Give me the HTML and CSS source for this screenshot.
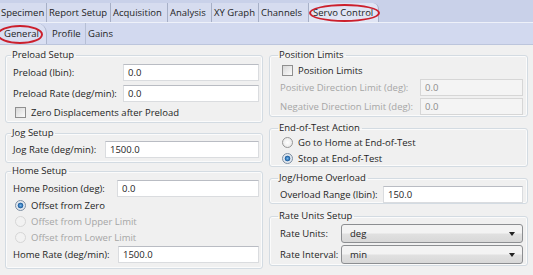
FILE: index.html
```html
<!DOCTYPE html>
<html>
<head>
<title>Servo Control</title>
<link rel="stylesheet" href="styles.css">
</head>
<body>

<div class="tabbar top">
<span class="tab t-spec">Specimen</span>
<span class="tab t-report">Report Setup</span>
<span class="tab t-acq">Acquisition</span>
<span class="tab t-ana">Analysis</span>
<span class="tab t-xy">XY Graph</span>
<span class="tab t-chan">Channels</span>
<span class="tab sel t-servo">Servo Control</span>
<span class="mark mark-servo"></span>
</div>

<div class="tabbar sub">
<span class="tab sel t-gen">General</span>
<span class="tab t-prof">Profile</span>
<span class="tab t-gains">Gains</span>
<span class="mark mark-general"></span>
</div>

<div class="panel">
<div class="col">

<fieldset class="group g-preload">
<legend>Preload Setup</legend>
<div class="row h21"><label class="lbl w-preload">Preload (lbin):</label><span class="field">0.0</span></div>
<div class="row h21"><label class="lbl w-preload">Preload Rate (deg/min):</label><span class="field">0.0</span></div>
<div class="row h16"><span class="box"></span>Zero Displacements after Preload</div>
</fieldset>

<fieldset class="group g-jog">
<legend>Jog Setup</legend>
<div class="row h19"><label class="lbl w-jog">Jog Rate (deg/min):</label><span class="field">1500.0</span></div>
</fieldset>

<fieldset class="group g-home">
<legend>Home Setup</legend>
<div class="row h20"><label class="lbl w-homepos">Home Position (deg):</label><span class="field">0.0</span></div>
<div class="row h15"><span class="dot on"></span>Offset from Zero</div>
<div class="row h16 off"><span class="dot"></span>Offset from Upper Limit</div>
<div class="row h16 off"><span class="dot"></span>Offset from Lower Limit</div>
<div class="row h19"><label class="lbl w-homerate">Home Rate (deg/min):</label><span class="field">1500.0</span></div>
</fieldset>

</div>
<div class="col">

<fieldset class="group g-limits">
<legend>Position Limits</legend>
<div class="row h16"><span class="box"></span>Position Limits</div>
<div class="row h19 off"><label class="lbl w-limit">Positive Direction Limit (deg):</label><span class="field dis">0.0</span></div>
<div class="row h19 off"><label class="lbl w-limit">Negative Direction Limit (deg):</label><span class="field dis">0.0</span></div>
</fieldset>

<fieldset class="group g-end">
<legend>End-of-Test Action</legend>
<div class="row h15"><span class="dot"></span>Go to Home at End-of-Test</div>
<div class="row h16"><span class="dot on"></span>Stop at End-of-Test</div>
</fieldset>

<fieldset class="group g-over">
<legend>Jog/Home Overload</legend>
<div class="row h18"><label class="lbl w-over">Overload Range (lbin):</label><span class="field">150.0</span></div>
</fieldset>

<fieldset class="group g-units">
<legend>Rate Units Setup</legend>
<div class="row h21"><label class="lbl w-units">Rate Units:</label><span class="combo">deg</span></div>
<div class="row h21"><label class="lbl w-units">Rate Interval:</label><span class="combo">min</span></div>
</fieldset>

</div>
</div>

</body>
</html>
```

FILE: styles.css
```css
/* Servo Control page, Windows 7 look */

*
{ box-sizing: border-box;
}

body
{ margin: 0;
width: 533px;
height: 275px;
overflow: hidden;
background-color: #f0f0f0;
font-family: "Open Sans", "DejaVu Sans", sans-serif;
font-size: 9.5px;
color: #1e1e1e;
}

/* Tabs */

div.tabbar
{ position: relative;
display: flex;
align-items: stretch;
overflow: hidden;
white-space: nowrap;
}

div.top
{ height: 23px;
padding-top: 3px;
background-color: #c9d1e9;
border-bottom: 1px solid #eef1f9;
}

div.sub
{ height: 22px;
background-color: #d2d9ef;
border-bottom: 1px solid #bcc5dc;
}

span.tab
{ display: flex;
align-items: center;
padding-left: 2px;
border-right: 1px solid #a7b0c7;
background-color: #d6dcef;
}

span.t-spec { width: 47px; padding-left: 1px; }
span.t-report { width: 64px; }
span.t-acq { width: 57px; }
span.t-ana { width: 44px; }
span.t-xy { width: 47px; }
span.t-chan { width: 50px; }
span.t-servo { width: 70px; padding-left: 4px; }

span.sel
{ background-color: #e0e5f4;
border-top-right-radius: 6px;
}

div.sub span.tab
{ border-right: 0;
background-color: transparent;
}

div.sub span.t-gen
{ width: 47px;
padding-left: 4px;
border-right: 1px solid #aeb7ce;
border-top-right-radius: 10px;
background-color: #d9dff2;
}

div.sub span.t-prof
{ width: 39px;
padding-left: 5px;
border-right: 1px solid #b6bfd5;
}

span.t-gains { width: 34px; }

/* red hand-drawn marks over the tabs */
span.mark
{ position: absolute;
border: 2px solid #cc1f2c;
border-radius: 50%;
}

span.mark-servo
{ left: 309px; top: 4px; width: 71px; height: 18px;
}

span.mark-general
{ left: -3px; top: 2px; width: 46px; height: 19px;
}

/* Panel */

div.panel
{ display: grid;
grid-template-columns: 258px 259px;
column-gap: 6px;
padding: 3px 0 0 5px;
}

div.col
{ display: flex;
flex-direction: column;
}

fieldset.group
{ margin: 0;
padding: 0 3px 0 7px;
border: 1px solid #d3dbe2;
border-radius: 3px;
box-shadow: inset 0 0 0 1px #fbfbfb;
}

div.col + div.col fieldset.group
{ padding: 0 4px 0 10px;
}

legend
{ padding: 0 2px 0 1px;
margin-left: -2px;
line-height: 14px;
}

div.row
{ display: flex;
align-items: center;
}

div.h15 { height: 15px; }
div.h16 { height: 16px; }
div.h18 { height: 18px; }
div.h19 { height: 19px; }
div.h20 { height: 20px; }
div.h21 { height: 21px; }

label.lbl
{ flex: none;
}

/* label widths line the fields up */
label.w-preload { width: 110px; }
label.w-jog { width: 92px; }
label.w-homepos { width: 104px; }
label.w-homerate { width: 105px; }
label.w-limit { width: 140px; }
label.w-over { width: 103px; }
label.w-units { width: 61px; }

span.field
{ flex: 1;
height: 17px;
line-height: 15px;
padding: 0 4px;
background-color: #fff;
border: 1px solid #dadcdf;
border-top-color: #b9bcc3;
}

span.dis
{ background-color: #f4f4f4;
color: #8d8d8d;
border-color: #d6d6d6;
}

div.off
{ color: #a6a6a6;
}

span.combo
{ flex: 1;
position: relative;
height: 19px;
line-height: 17px;
padding: 0 8px;
border: 1px solid #8c8e91;
border-radius: 3px;
background: linear-gradient(#f3f3f3 45%, #e0e0e0 55%, #d8d8d8);
}

span.combo::after
{ content: "";
position: absolute;
right: 7px; top: 7px;
border-left: 3px solid transparent;
border-right: 3px solid transparent;
border-top: 4px solid #222;
}

span.box
{ width: 11px;
height: 11px;
margin: 0 5px 0 2px;
border: 1px solid #8f8f8f;
background: linear-gradient(135deg, #d8d8d8, #fbfbfb);
}

span.dot
{ width: 11px;
height: 11px;
margin: 0 5px 0 2px;
border: 1px solid #969696;
border-radius: 50%;
background: radial-gradient(circle, #fff 0, #e2e2e2 100%);
}

span.on
{ background: radial-gradient(circle, #75b8ee 0, #1d5e9f 2.5px, #e2e8ef 3.2px);
border-color: #7d8fa3;
}

div.off span.dot
{ border-color: #d6d6d6;
background: #f2f2f2;
}

/* group spacing */
fieldset.g-preload { padding-bottom: 2px; margin-bottom: 3px; }
fieldset.g-jog { padding-bottom: 3px; margin-bottom: 1px; }
fieldset.g-home { padding-bottom: 4px; }
fieldset.g-limits { padding-bottom: 4px; margin-bottom: 4px; }
fieldset.g-end { padding-bottom: 0; margin-bottom: 4px; }
fieldset.g-over { padding-bottom: 2px; margin-bottom: 5px; }
fieldset.g-units { padding-bottom: 1px; }
```
